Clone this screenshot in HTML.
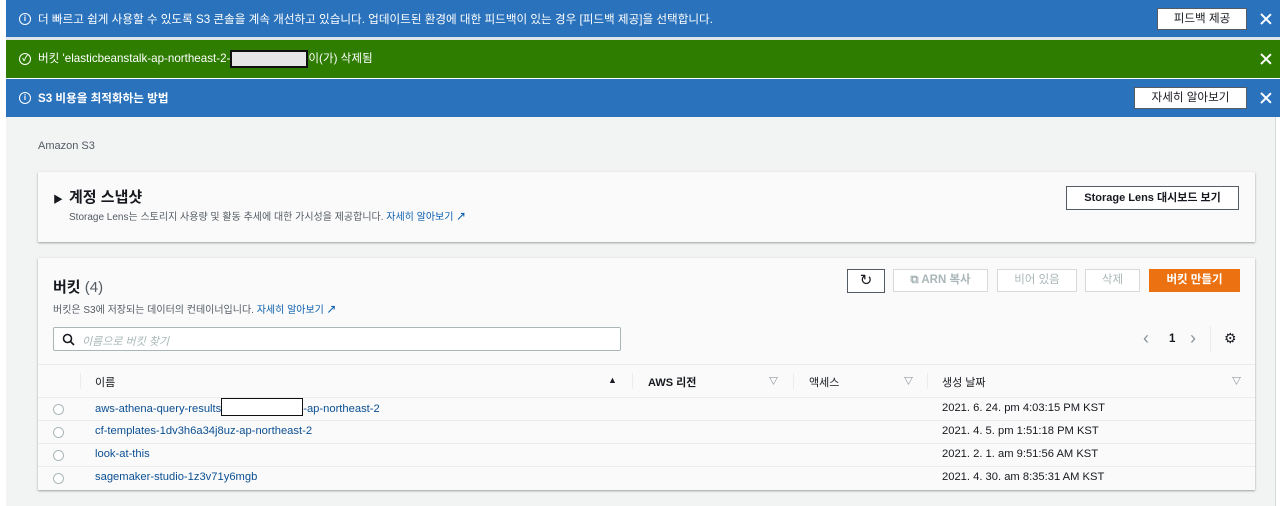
<!DOCTYPE html>
<html><head><meta charset="utf-8"><style>
*{box-sizing:border-box;margin:0;padding:0}
body{width:1280px;height:506px;overflow:hidden;background:#fff;font-family:"Liberation Sans","Noto Sans CJK KR",sans-serif;font-size:11.5px;color:#16191f;position:relative}
.abs{position:absolute}
.ban{position:absolute;left:6px;width:1274px;color:#fff;font-size:11.6px}
.ban .t{position:absolute;left:32px;top:50%;transform:translateY(-50%);white-space:nowrap}
.ban .ic{position:absolute;left:13px;top:50%;transform:translateY(-50%);width:12px;height:12px;border:1.5px solid #fff;border-radius:50%;font-size:8px;line-height:9px;text-align:center;font-weight:bold}
.x{position:absolute;right:8px;top:50%;transform:translateY(-50%);width:12px;height:12px}
.x:before,.x:after{content:"";position:absolute;left:5px;top:-1px;width:1.6px;height:14px;background:#fff;transform:rotate(45deg)}
.x:after{transform:rotate(-45deg)}
.wbtn{position:absolute;background:#fff;color:#16191f;border:1px solid #545b64;font-size:11.6px;text-align:center;top:50%;transform:translateY(-50%);height:22px;line-height:20px}
.card{position:absolute;left:38px;width:1217px;background:#fafafa;box-shadow:0 1px 2px rgba(0,0,0,.35)}
.link{color:#0b5eaf}
.gb{position:absolute;top:11px;height:23px;border:1px solid #d5dbdb;background:#fff;color:#aab7b8;font-weight:bold;text-align:center;line-height:21px;font-size:11.5px}
.row{position:absolute;left:0;width:1217px;height:23px;border-top:1px solid #eaeded}
.row .r{position:absolute;left:15px;top:6px;width:11px;height:11px;border:1px solid #aab7b8;border-radius:50%;background:#fff}
.row .n{position:absolute;left:57px;top:4px;color:#0b4f93;font-size:11.2px}
.row .d{position:absolute;left:904px;top:4px;font-size:11.2px}
</style></head><body>
<div class="abs" style="left:6px;top:117px;width:1269px;height:389px;background:#f2f3f3"></div>
<div class="abs" style="left:1275px;top:117px;width:1px;height:389px;background:#d5dbdb"></div>

<div class="ban" style="top:0;height:37px;background:#2a72bc">
<div class="ic">i</div><div class="t">더 빠르고 쉽게 사용할 수 있도록 S3 콘솔을 계속 개선하고 있습니다. 업데이트된 환경에 대한 피드백이 있는 경우 [피드백 제공]을 선택합니다.</div>
<div class="wbtn" style="left:1151px;width:90px">피드백 제공</div><div class="x"></div></div>
<div class="abs" style="left:6px;top:37px;width:1274px;height:3px;background:#dfe6ea"></div>
<div class="ban" style="top:40px;height:38px;background:#2e7d00">
<div class="ic">✓</div><div class="t">버킷 'elasticbeanstalk-ap-northeast-2-<span style="display:inline-block;width:78px;height:18px;background:#e6e6e6;border:2px solid #111;vertical-align:middle"></span>이(가) 삭제됨</div><div class="x"></div></div>
<div class="ban" style="top:79px;height:38px;background:#2a72bc">
<div class="ic">i</div><div class="t" style="font-weight:bold">S3 비용을 최적화하는 방법</div>
<div class="wbtn" style="left:1128px;width:113px">자세히 알아보기</div><div class="x"></div></div>

<div class="abs" style="left:38px;top:140px;font-size:11px;color:#545b64">Amazon S3</div>

<div class="card" style="top:172px;height:70px">
<div class="abs" style="left:15px;top:19px;font-size:10px">▶</div>
<div class="abs" style="left:31px;top:14px;font-size:15px;font-weight:bold">계정 스냅샷</div>
<div class="abs" style="left:31px;top:36px;font-size:10px;color:#545b64">Storage Lens는 스토리지 사용량 및 활동 추세에 대한 가시성을 제공합니다. <span class="link">자세히 알아보기</span> <span class="link" style="font-weight:bold">↗</span></div>
<div class="abs" style="left:1028px;top:14px;width:173px;height:24px;border:1px solid #545b64;background:#fff;text-align:center;line-height:22px;font-weight:bold;font-size:11px">Storage Lens 대시보드 보기</div>
</div>

<div class="card" style="top:258px;height:232px">
<div class="abs" style="left:15px;top:18px;font-size:15px;font-weight:bold">버킷 <span style="font-weight:normal;color:#545b64">(4)</span></div>
<div class="abs" style="left:15px;top:43px;font-size:10px;color:#545b64">버킷은 S3에 저장되는 데이터의 컨테이너입니다. <span class="link">자세히 알아보기</span> <span class="link" style="font-weight:bold">↗</span></div>
<div class="abs" style="left:809px;top:11px;width:38px;height:24px;border:1px solid #545b64;background:#fff;text-align:center;line-height:22px;font-size:15px">↻</div>
<div class="gb" style="left:855px;width:95px">⧉ ARN 복사</div>
<div class="gb" style="left:959px;width:80px;font-weight:normal">비어 있음</div>
<div class="gb" style="left:1047px;width:55px;font-weight:normal">삭제</div>
<div class="abs" style="left:1111px;top:11px;width:91px;height:23px;background:#ec7211;color:#fff;font-weight:bold;text-align:center;line-height:23px">버킷 만들기</div>
<div class="abs" style="left:15px;top:69px;width:568px;height:24px;border:1px solid #aab7b8;background:#fff;border-radius:2px"><svg class="abs" style="left:8px;top:5px" width="13" height="13" viewBox="0 0 13 13"><circle cx="5.5" cy="5.5" r="4" fill="none" stroke="#16191f" stroke-width="1.6"/><path d="M8.5 8.5L12 12" stroke="#16191f" stroke-width="1.6"/></svg><span class="abs" style="left:28px;top:5px;color:#aab7b8;font-style:italic;font-size:11px">이름으로 버킷 찾기</span></div>
<div class="abs" style="left:1105px;top:70px;font-size:18px;color:#879596">‹</div>
<div class="abs" style="left:1131px;top:75px;font-weight:bold">1</div>
<div class="abs" style="left:1152px;top:70px;font-size:18px;color:#879596">›</div>
<div class="abs" style="left:1172px;top:68px;width:1px;height:26px;background:#eaeded"></div>
<div class="abs" style="left:1186px;top:72px;font-size:14px">⚙</div>
<div class="abs" style="left:0;top:106px;width:1217px;height:33px;border-top:1px solid #eaeded;background:#fafafa">
<div class="abs" style="left:42px;top:8px;width:1px;height:16px;background:#eaeded"></div>
<div class="abs" style="left:57px;top:9px;font-size:11px">이름</div>
<div class="abs" style="left:570px;top:10px;font-size:9px">▲</div>
<div class="abs" style="left:594px;top:8px;width:1px;height:16px;background:#eaeded"></div>
<div class="abs" style="left:610px;top:9px;font-size:11px;font-weight:bold">AWS 리전</div>
<div class="abs" style="left:731px;top:9px;font-size:9px;color:#545b64">▽</div>
<div class="abs" style="left:755px;top:8px;width:1px;height:16px;background:#eaeded"></div>
<div class="abs" style="left:771px;top:9px;font-size:11px">액세스</div>
<div class="abs" style="left:866px;top:9px;font-size:9px;color:#545b64">▽</div>
<div class="abs" style="left:889px;top:8px;width:1px;height:16px;background:#eaeded"></div>
<div class="abs" style="left:904px;top:9px;font-size:11px">생성 날짜</div>
<div class="abs" style="left:1194px;top:9px;font-size:9px;color:#545b64">▽</div>
</div>
<div class="row" style="top:139px"><div class="r"></div><div class="n">aws-athena-query-results<span style="display:inline-block;width:82px;height:18px;background:#fff;border:1px solid #111;vertical-align:middle;margin-top:-4px"></span>-ap-northeast-2</div><div class="d">2021. 6. 24. pm 4:03:15 PM KST</div></div>
<div class="row" style="top:162px"><div class="r"></div><div class="n">cf-templates-1dv3h6a34j8uz-ap-northeast-2</div><div class="d">2021. 4. 5. pm 1:51:18 PM KST</div></div>
<div class="row" style="top:185px"><div class="r"></div><div class="n">look-at-this</div><div class="d">2021. 2. 1. am 9:51:56 AM KST</div></div>
<div class="row" style="top:208px"><div class="r"></div><div class="n">sagemaker-studio-1z3v71y6mgb</div><div class="d">2021. 4. 30. am 8:35:31 AM KST</div></div>
</div>
</body></html>
